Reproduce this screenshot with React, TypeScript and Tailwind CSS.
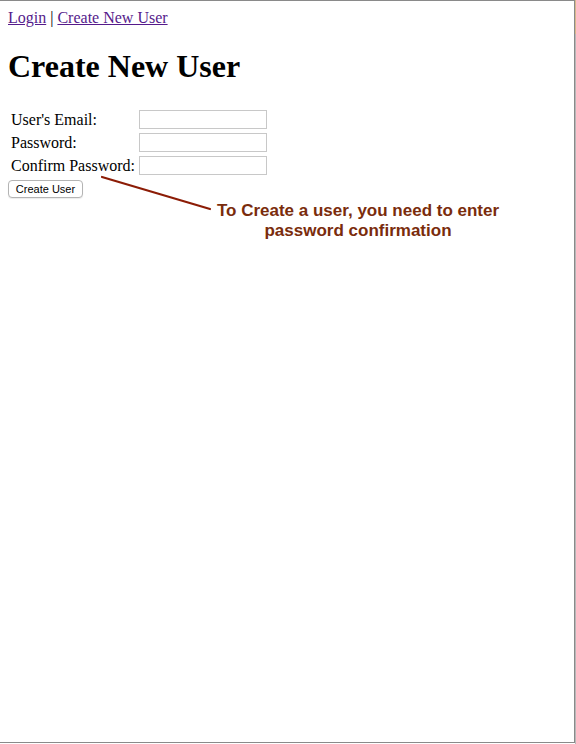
import React from "react";

const FIELDS = [
  { label: "User's Email:", type: "text" },
  { label: "Password:", type: "password" },
  { label: "Confirm Password:", type: "password" },
];

export default function App() {
  return (
    <div className="flex w-[576px] h-[744px] bg-white">
      {/* browser window frame */}
      <div className="relative w-[575px] h-[743px] border-t border-r border-b border-[#8a8a8a] bg-white font-['Liberation_Serif',serif] text-[16px] text-black">
        <div className="px-2 pt-[8px]">
          <div className="leading-[18px]">
            <a href="#" className="text-[#551a8b] underline">
              Login
            </a>{" "}
            |{" "}
            <a href="#" className="text-[#551a8b] underline">
              Create New User
            </a>
          </div>

          <h1 className="mt-[21px] mb-[22px] text-[32px] font-bold leading-[37px]">
            Create New User
          </h1>

          <table className="border-separate border-spacing-[2px]">
            <tbody>
              {FIELDS.map((f) => (
                <tr key={f.label}>
                  <td className="p-px leading-[19px] whitespace-nowrap">
                    {f.label}
                  </td>
                  <td className="p-px">
                    <input
                      type={f.type}
                      className="block w-[128px] h-[19px] border border-[#c8c8c8] bg-white outline-none"
                    />
                  </td>
                </tr>
              ))}
            </tbody>
          </table>

          <button className="mt-[2px] block h-[18px] w-[75px] rounded-[4px] border border-[#b4b4b4] bg-white font-['Liberation_Sans',Arial,sans-serif] text-[11px] leading-[16px] text-black shadow-[0_1px_1px_rgba(0,0,0,0.08)]">
            Create User
          </button>
        </div>

        {/* annotation callout */}
        <svg
          className="absolute left-0 top-0 pointer-events-none"
          width="575"
          height="260"
        >
          <line
            x1="102"
            y1="176"
            x2="210"
            y2="208"
            stroke="#8c1c06"
            strokeWidth="2.2"
            strokeLinecap="round"
          />
        </svg>
        <div className="absolute left-[208px] top-[200px] w-[300px] text-center font-['Liberation_Sans',Arial,sans-serif] text-[17px] font-bold leading-[20px] text-[#7a2c0c]">
          To Create a user, you need to enter
          <br />
          password confirmation
        </div>
      </div>
      <div className="flex-1 flex flex-col">
        <div className="h-[34px] bg-[#d8b98c]" />
        <div className="flex-1 bg-[#b8b8b8]" />
      </div>
    </div>
  );
}
